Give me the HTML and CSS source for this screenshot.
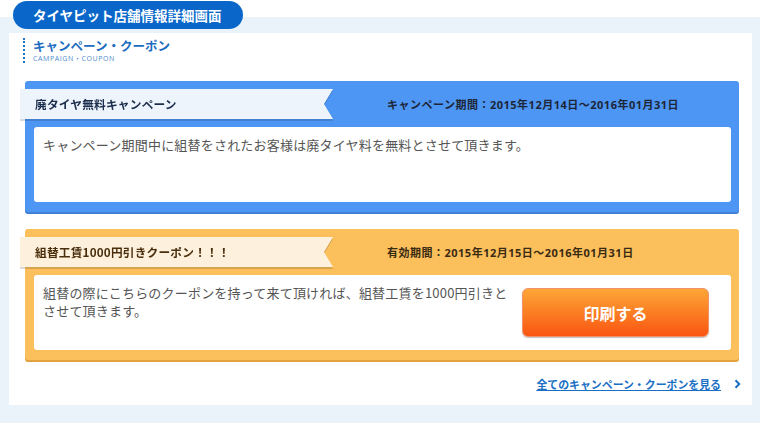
FILE: index.html
```html
<!DOCTYPE html>
<html lang="ja">
  <head>
    <meta charset="UTF-8" />
    <meta name="viewport" content="width=device-width, initial-scale=1.0" />
    <title>タイヤピット店舗情報詳細画面</title>
    <link rel="stylesheet" href="styles.css">
  </head>
  <body>
    <div class="tab">タイヤピット店舗情報詳細画面</div>

    <div class="panel">
      <div class="heading">
        <h2>キャンペーン・クーポン</h2>
        <p>CAMPAIGN・COUPON</p>
      </div>

      <div class="card card-blue">
        <div class="card-head">
          <div class="ribbon-wrap"><div class="ribbon">廃タイヤ無料キャンペーン</div></div>
          <div class="period">キャンペーン期間：2015年12月14日～2016年01月31日</div>
        </div>
        <div class="card-body">
          <p>キャンペーン期間中に組替をされたお客様は廃タイヤ料を無料とさせて頂きます。</p>
        </div>
      </div>

      <div class="card card-orange">
        <div class="card-head">
          <div class="ribbon-wrap"><div class="ribbon">組替工賃1000円引きクーポン！！！</div></div>
          <div class="period">有効期間：2015年12月15日～2016年01月31日</div>
        </div>
        <div class="card-body coupon">
          <p>組替の際にこちらのクーポンを持って来て頂ければ、組替工賃を1000円引きとさせて頂きます。</p>
          <button type="button" class="print-button">印刷する</button>
        </div>
      </div>

      <div class="more">
        <a href="#">全てのキャンペーン・クーポンを見る</a>
        <svg class="chev" width="7" height="10" viewBox="0 0 7 10"><path d="M1.5 1.2 L5.2 5 L1.5 8.8" fill="none" stroke="#1a6fc4" stroke-width="2"/></svg>
      </div>
    </div>
  </body>
</html>
```

FILE: styles.css
```css
body {
  margin: 0;
  font-family: "Noto Sans CJK JP", "Noto Sans", sans-serif;
  background: linear-gradient(#fff 0, #fff 17px, #eaf2fa 17px);
  height: 423px;
  overflow: hidden;
}
.tab {
  margin: 1px 0 0 13px;
  width: 230px;
  height: 28px;
  line-height: 28px;
  box-sizing: border-box;
  padding-left: 20px;
  background: #0a67c9;
  border-radius: 15px;
  color: #fff;
  font-size: 13.5px;
  font-weight: bold;
}
.panel {
  margin: 4px 8px 0 9px;
  background: #fff;
  padding: 5px 13px 14px 14px;
}
.heading {
  border-left: 2px dotted #2a74c4;
  padding-left: 8px;
  margin-bottom: 18px;
}
.heading h2 {
  margin: 0;
  font-size: 12.5px;
  line-height: 16px;
  color: #1b6bc0;
}
.heading p {
  margin: 0;
  padding-top: 1px;
  font-family: "Open Sans", "Noto Sans CJK JP", sans-serif;
  font-size: 7px;
  line-height: 8px;
  letter-spacing: 0.6px;
  color: #4f8ccc;
}
.card {
  margin: 0 0 17px 2px;
  padding-bottom: 10px;
  border-radius: 3px;
}
.card-blue {
  background: #4e96f4;
  box-shadow: 0 2px 0 #3f7fd4;
}
.card-orange {
  background: #fbbf5c;
  box-shadow: 0 2px 0 #e0a23e;
}
.card-head {
  display: flex;
  align-items: center;
  padding-top: 8px;
  margin-bottom: 8px;
}
.ribbon-wrap {
  margin-left: -5px;
  filter: drop-shadow(0 2px 0 rgba(0, 0, 0, 0.14));
}
.ribbon {
  width: 313px;
  height: 30px;
  line-height: 30px;
  box-sizing: border-box;
  padding-left: 15px;
  font-size: 11.7px;
  font-weight: bold;
  letter-spacing: 0.2px;
  clip-path: polygon(0 0, 100% 0, calc(100% - 9px) 50%, 100% 100%, 0 100%);
}
.card-blue .ribbon {
  background: #eef4fb;
  color: #1b2d4c;
}
.card-orange .ribbon {
  background: #fdf1dd;
  color: #4a2e0c;
}
.period {
  margin-left: 54px;
  font-family: "Open Sans", "Noto Sans CJK JP", sans-serif;
  font-size: 11px;
  font-weight: bold;
  letter-spacing: 0.5px;
  color: #1d2637;
}
.card-orange .period {
  color: #3a2a12;
}
.card-body {
  margin: 0 8px 0 9px;
  height: 75px;
  box-sizing: border-box;
  padding: 9px 9px;
  background: #fff;
  border-radius: 3px;
}
.card-body p {
  margin: 0;
  font-size: 13px;
  line-height: 18px;
  letter-spacing: 0.2px;
  color: #555;
}
.coupon {
  display: flex;
  align-items: flex-start;
}
.coupon p {
  flex: 0 0 472px;
}
.print-button {
  margin: 4px 13px 0 auto;
  width: 187px;
  height: 49px;
  border: 1px solid #f2926a;
  border-radius: 6px;
  background: linear-gradient(#fca736, #fb7a22 55%, #fa5512);
  box-shadow: 0 1px 1px rgba(0, 0, 0, 0.25);
  color: #fff;
  font-family: "Noto Sans CJK JP", sans-serif;
  font-size: 16px;
  font-weight: bold;
  cursor: pointer;
}
.more {
  display: flex;
  justify-content: flex-end;
  align-items: center;
  gap: 13px;
  margin-right: -2px;
  height: 14px;
}
.more a {
  font-size: 10.9px;
  font-weight: bold;
  color: #1a6fc4;
  text-decoration: underline;
}
```
